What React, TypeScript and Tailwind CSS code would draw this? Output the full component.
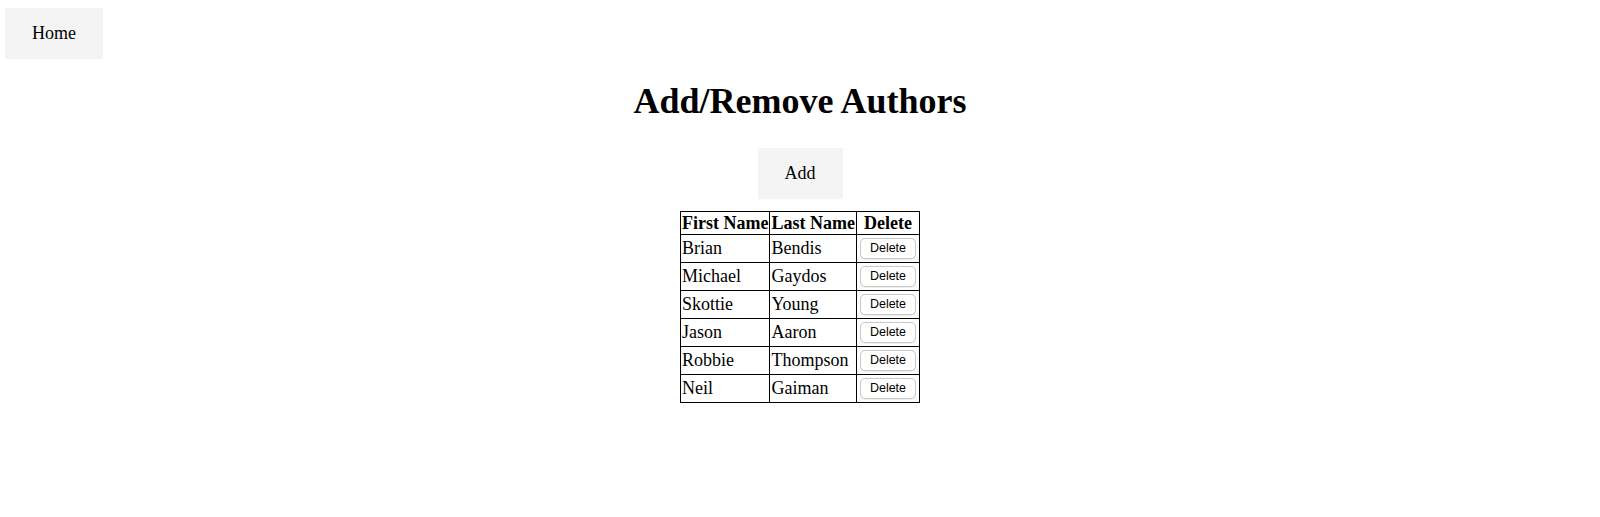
const authors = [
  { first: "Brian", last: "Bendis" },
  { first: "Michael", last: "Gaydos" },
  { first: "Skottie", last: "Young" },
  { first: "Jason", last: "Aaron" },
  { first: "Robbie", last: "Thompson" },
  { first: "Neil", last: "Gaiman" },
]

function NavButton({ label }: { label: string }) {
  return (
    <button className="bg-[#f4f4f4] px-[27px] py-[15px] text-[18px] leading-[21px] text-black">
      {label}
    </button>
  )
}

export default function App() {
  return (
    <div className="min-h-[517px] w-full bg-white font-['Liberation_Serif','Times_New_Roman',serif] text-black">
      <div className="pl-[5px] pt-2">
        <NavButton label="Home" />
      </div>

      <div className="flex flex-col items-center">
        <h1 className="mt-[22px] text-[36px] font-bold leading-[41px]">Add/Remove Authors</h1>

        <div className="mt-[26px]">
          <NavButton label="Add" />
        </div>

        <table className="mt-3 border-collapse border border-black text-[18px] leading-[21px]">
          <thead>
            <tr>
              <th className="border border-black p-px font-bold leading-[20px]">First Name</th>
              <th className="border border-black p-px font-bold leading-[20px]">Last Name</th>
              <th className="border border-black p-px font-bold leading-[20px]">Delete</th>
            </tr>
          </thead>
          <tbody>
            {authors.map((a) => (
              <tr key={a.first}>
                <td className="border border-black p-px text-left">{a.first}</td>
                <td className="border border-black p-px text-left">{a.last}</td>
                <td className="border border-black p-px text-left">
                  <button className="m-0.5 h-[21px] rounded-[5px] border border-[#c9c9c9] bg-white px-[9px] font-['Liberation_Sans',Arial,sans-serif] text-[12.5px] leading-[19px] text-black shadow-[0_0.5px_1px_rgba(0,0,0,0.08)]">
                    Delete
                  </button>
                </td>
              </tr>
            ))}
          </tbody>
        </table>
      </div>
    </div>
  )
}
